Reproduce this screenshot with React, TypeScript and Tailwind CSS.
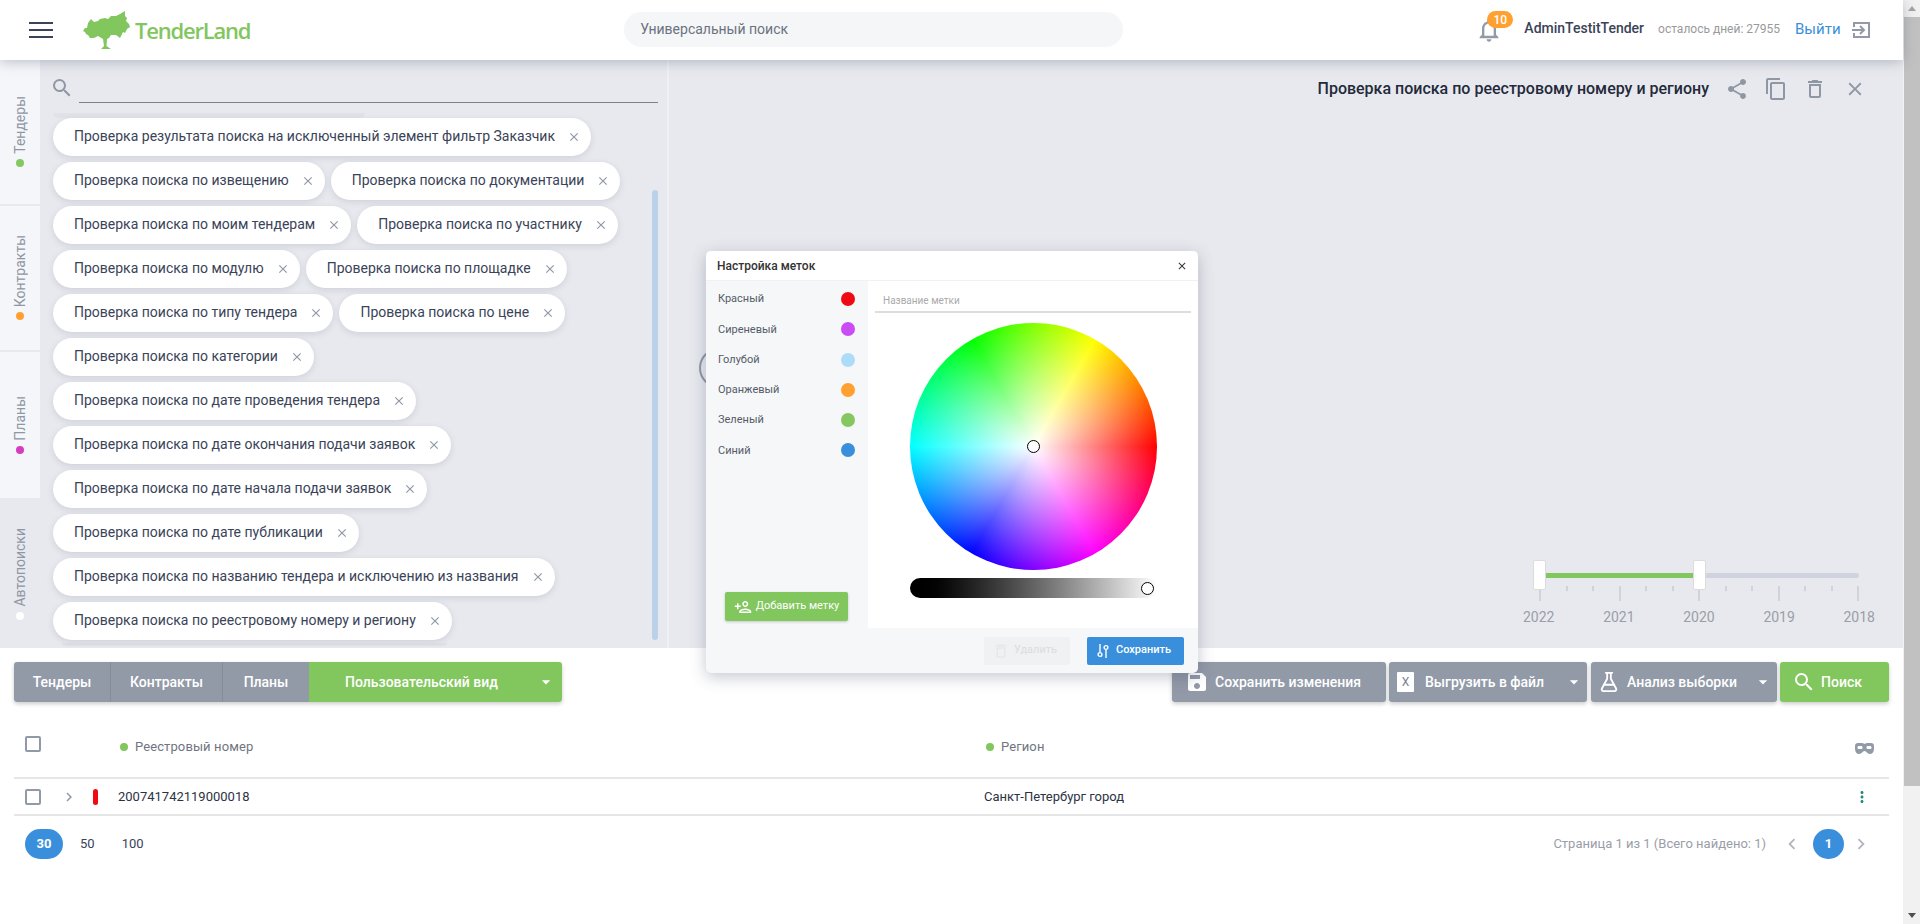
import {
  MdClose,
  MdContentCopy,
  MdDeleteOutline,
  MdOutlinePersonAdd,
  MdSave,
  MdSearch,
  MdShare,
  MdChevronLeft,
  MdChevronRight,
  MdMoreVert,
  MdOutlineNotifications,
  MdArrowDropDown,
} from 'react-icons/md';
import { FlaskConical } from 'lucide-react';

const chipRows = [
  ['Проверка результата поиска на исключенный элемент фильтр Заказчик'],
  ['Проверка поиска по извещению', 'Проверка поиска по документации'],
  ['Проверка поиска по моим тендерам', 'Проверка поиска по участнику'],
  ['Проверка поиска по модулю', 'Проверка поиска по площадке'],
  ['Проверка поиска по типу тендера', 'Проверка поиска по цене'],
  ['Проверка поиска по категории'],
  ['Проверка поиска по дате проведения тендера'],
  ['Проверка поиска по дате окончания подачи заявок'],
  ['Проверка поиска по дате начала подачи заявок'],
  ['Проверка поиска по дате публикации'],
  ['Проверка поиска по названию тендера и исключению из названия'],
  ['Проверка поиска по реестровому номеру и региону'],
];

const labels = [
  { name: 'Красный', color: '#f00a14' },
  { name: 'Сиреневый', color: '#c94cf5' },
  { name: 'Голубой', color: '#addcfa' },
  { name: 'Оранжевый', color: '#ffa030' },
  { name: 'Зеленый', color: '#85c862' },
  { name: 'Синий', color: '#3a8fdc' },
];

const sideTabs = [
  { name: 'Тендеры', dot: '#85c862', height: 144, active: false },
  { name: 'Контракты', dot: '#ffa030', height: 145, active: false },
  { name: 'Планы', dot: '#d63cc0', height: 146, active: false },
  { name: 'Автопоиски', dot: '#ffffff', height: 149, active: true },
];

const years = ['2022', '2021', '2020', '2019', '2018'];

function Logo() {
  return (
    <div className="flex items-center ml-[30px]">
      <svg width="48" height="39" viewBox="0 0 48 39" className="text-[#82c65e]">
        <polygon
          fill="currentColor"
          points="0,20 2,17 4,17 5,12 8,8 11,11 15,10 17,8 22,7 25,8 28,5 33,5 37,3 42,0 42,5 44,7 43,10 46,13 47,16 44,18 42,22 40,21 37,27 33,24 28,24 26,27 24,28 23.500,35 28,38 18,38 21,35 20,28 15,25 11,27 7,27 5,24 3,23 2,21"
        />
      </svg>
      <span className="ml-[4px] mb-[1px] text-[22px] leading-none font-semibold text-[#82c65e] font-['Open_Sans',sans-serif] tracking-[-1.2px]">
        TenderLand
      </span>
    </div>
  );
}

function Header() {
  return (
    <header className="relative z-10 flex items-center h-[60px] bg-white shadow-[0_2px_12px_rgba(80,90,120,0.35)]">
      <button className="ml-[29px] flex flex-col gap-[4.5px] w-[24px]">
        <span className="block h-[2.5px] bg-[#3a4358]" />
        <span className="block h-[2.5px] bg-[#3a4358]" />
        <span className="block h-[2.5px] bg-[#3a4358]" />
      </button>
      <Logo />
      <div className="ml-[374px] mb-[2px] flex items-center w-[499px] h-[35px] rounded-full bg-[#f5f6f8] pl-[16px] text-[14px] text-[#6b7280]">
        Универсальный поиск
      </div>
      <div className="relative ml-[356px] w-[20px] h-[24px] flex items-center justify-center">
        <MdOutlineNotifications size={28} className="text-[#929aa8] shrink-0" />
        <span className="absolute left-[8px] -top-[7px] flex items-center justify-center w-[26px] h-[17px] rounded-full bg-[#ffa030] text-white text-[12px] font-medium">
          10
        </span>
      </div>
      <span className="ml-[25px] mb-[3px] text-[14px] font-medium text-[#3a4358]">AdminTestitTender</span>
      <span className="ml-[14px] mb-[2px] text-[12px] text-[#9a9a9a]">осталось дней: 27955</span>
      <span className="ml-[15px] mb-[2px] text-[15px] text-[#3a8fdc]">Выйти</span>
      <svg width="18" height="18" viewBox="0 0 18 18" fill="none" stroke="#929aa8" strokeWidth="2" className="ml-[11px]">
        <path d="M2 6V2h15v14H2v-4" />
        <path d="M0 9h11M8 5l4 4-4 4" />
      </svg>
    </header>
  );
}

function Chip({ text }: { text: string }) {
  return (
    <div className="flex items-center h-[38px] rounded-full bg-white pl-[21px] pr-[10px] shadow-[0_2px_6px_rgba(90,100,130,0.18)]">
      <span className="mb-[1px] text-[14px] text-[#3a4358] whitespace-nowrap">{text}</span>
      <MdClose size={14} className="ml-[12px] text-[#8f97a5]" />
    </div>
  );
}

function SearchesPanel() {
  return (
    <div className="relative w-[629px] h-full border-r-2 border-[#eef0f3]">
      <div className="flex items-start h-[53px] pl-[10px] pr-[9px]">
        <MdSearch size={24} className="mt-[16px] text-[#8f97a5]" />
        <div className="ml-[5px] flex-1 h-[43px] border-b border-[#7a7f88]" />
      </div>
      <div className="ml-[13px] h-[5px] w-[312px] rounded-b-full bg-[#e1e2e8]" />
      <div className="flex flex-col gap-[6px] pl-[13px]">
        {chipRows.map((row) => (
          <div key={row[0]} className="flex gap-[6px]">
            {row.map((text) => (
              <Chip key={text} text={text} />
            ))}
          </div>
        ))}
      </div>
      <div className="ml-[22px] mt-[3px] h-[3px] w-[385px] rounded-b-full bg-[#e1e2e8]" />
      <div className="absolute left-[612px] top-[130px] w-[6px] h-[450px] rounded-full bg-[#b9d2ea]" />
    </div>
  );
}

function SideTabs() {
  return (
    <div className="flex flex-col w-[40px] shrink-0 gap-[2px]">
      {sideTabs.map((tab) => (
        <div
          key={tab.name}
          style={{ height: tab.height }}
          className={`flex items-center justify-center ${tab.active ? 'bg-[#e8e9ee]' : 'bg-[#f5f6f9]'}`}
        >
          <div className="flex flex-col-reverse items-center gap-[5px]">
            <span style={{ background: tab.dot }} className="block w-[8px] h-[8px] rounded-full" />
            <span className="[writing-mode:vertical-rl] rotate-180 text-[14px] leading-none text-[#8f97a5]">
              {tab.name}
            </span>
          </div>
        </div>
      ))}
    </div>
  );
}

function YearSlider() {
  return (
    <div className="relative w-[320px] mr-[44px] mb-[21px]">
      <div className="h-[5px] rounded-full bg-[#cfd3de]">
        <div className="h-[5px] w-[160px] bg-[#82c65e]" />
      </div>
      <span className="absolute left-[-6px] top-[-13px] w-[13px] h-[30px] rounded-[2px] bg-white border border-[#dcdcdc]" />
      <span className="absolute left-[154px] top-[-13px] w-[13px] h-[30px] rounded-[2px] bg-white border border-[#dcdcdc]" />
      <div className="flex justify-between mt-[8px] px-0">
        {Array.from({ length: 13 }).map((_, i) => (
          <span key={i} className={`block w-[2px] ${i % 3 === 0 ? 'h-[15px] bg-[#cfd3de]' : 'h-[5px] bg-[#cfd3de]'}`} />
        ))}
      </div>
      <div className="flex justify-between mt-[6px] -mx-[16px] text-[14px] leading-[20px] text-[#9a9ea8]">
        {years.map((y) => (
          <span key={y}>{y}</span>
        ))}
      </div>
    </div>
  );
}

function SliderIcon() {
  return (
    <svg width="12" height="14" viewBox="0 0 12 14" fill="none" stroke="white" strokeWidth="1.4">
      <path d="M3 0v8M9 6v8" />
      <circle cx="3" cy="10.5" r="1.9" />
      <circle cx="9" cy="3.5" r="1.9" />
    </svg>
  );
}

function LabelsModal() {
  return (
    <div className="absolute left-[706px] top-[251px] z-20 flex flex-col w-[492px] h-[422px] rounded-[5px] bg-[#f6f7f9] shadow-[0_4px_16px_rgba(60,70,100,0.3)] overflow-hidden">
      <div className="flex items-center justify-between h-[30px] px-[11px] bg-white border-b border-[#f0f1f3]">
        <span className="text-[12px] font-medium text-[#333]">Настройка меток</span>
        <MdClose size={12} className="mr-[-1px] text-[#333]" />
      </div>
      <div className="flex flex-1">
        <div className="flex flex-col w-[162px] pl-[12px] pr-[13px] pt-[3px] pb-[7px]">
          <div className="flex flex-col gap-[0.3px] flex-1">
            {labels.map((l) => (
              <div key={l.name} className="flex items-center justify-between h-[30px] text-[11px] text-[#555c68]">
                <span className="mt-[1px]">{l.name}</span>
                <span style={{ background: l.color }} className="block w-[14px] h-[14px] rounded-full" />
              </div>
            ))}
          </div>
          <button className="flex items-center justify-center gap-[4px] ml-[7px] w-[123px] h-[29px] rounded-[2px] bg-[#82c65e] text-white text-[11px] shadow-[0_1px_3px_rgba(0,0,0,0.2)]">
            <MdOutlinePersonAdd size={18} />
            Добавить метку
          </button>
        </div>
        <div className="flex-1 flex flex-col items-center bg-white px-[7px]">
          <div className="w-full h-[32px] pt-[12px] pl-[8px] border-b-2 border-[#dddddd] text-[10px] leading-[16px] text-[#aaaaaa]">
            Название метки
          </div>
          <div className="relative mt-[10px] w-[247px] h-[247px] rounded-full bg-[radial-gradient(closest-side,#ffffff,rgba(255,255,255,0)),conic-gradient(from_90deg,#ff0000,#ff00ff,#0000ff,#00ffff,#00ff00,#ffff00,#ff0000)]">
            <span className="absolute left-[117px] top-[117px] w-[13px] h-[13px] rounded-full border-[1.75px] border-black bg-white/60" />
          </div>
          <div className="relative mt-[8px] w-[247px] h-[20px] rounded-full bg-gradient-to-r from-black to-white">
            <span className="absolute left-[231px] top-[4px] w-[13px] h-[13px] rounded-full border-[1.75px] border-black bg-white" />
          </div>
        </div>
      </div>
      <div className="flex items-center justify-end gap-[17px] h-[45px] pr-[14px]">
        <button className="flex items-center w-[86px] h-[28px] pl-[8px] gap-[4px] rounded-[2px] bg-[#f0f1f3] text-[#dcdcdc] text-[11px]">
          <MdDeleteOutline size={18} className="text-[#e6e7ea]" />
          Удалить
        </button>
        <button className="flex items-center w-[97px] h-[28px] pl-[10px] gap-[7px] rounded-[2px] bg-[#3a8fdc] text-white text-[11px] font-medium">
          <SliderIcon />
          Сохранить
        </button>
      </div>
    </div>
  );
}

function MainPanel() {
  return (
    <div className="relative flex-1 flex flex-col justify-between items-end">
      <div className="flex items-center mt-[17px] mr-[39px]">
        <span className="text-[16px] font-medium text-[#232a3a] mr-[16px]">Проверка поиска по реестровому номеру и региону</span>
        <MdShare size={24} className="text-[#8f97a5]" />
        <MdContentCopy size={24} className="ml-[15px] text-[#8f97a5]" />
        <MdDeleteOutline size={24} className="ml-[15px] text-[#8f97a5]" />
        <MdClose size={22} className="ml-[17px] -mr-[2px] text-[#8f97a5]" />
      </div>
      <YearSlider />
    </div>
  );
}

function ToolButton({ children, className }: { children: React.ReactNode; className: string }) {
  return (
    <button className={`relative flex items-center h-[40px] rounded-[3px] bg-[#929aa8] text-white text-[14px] font-medium shadow-[0_2px_4px_rgba(0,0,0,0.2)] ${className}`}>
      {children}
    </button>
  );
}

function Toolbar() {
  return (
    <div className="flex justify-between px-[14px] pt-[14px]">
      <div className="flex h-[40px] rounded-[3px] overflow-hidden text-white text-[14px] font-medium shadow-[0_2px_4px_rgba(0,0,0,0.2)]">
        <span className="flex items-center justify-center w-[97px] bg-[#929aa8] border-r border-[#858d9c]">Тендеры</span>
        <span className="flex items-center justify-center w-[112px] bg-[#929aa8] border-r border-[#858d9c]">Контракты</span>
        <span className="flex items-center justify-center w-[86px] bg-[#929aa8]">Планы</span>
        <span className="flex items-center w-[253px] pl-[36px] bg-[#82c65e]">
          Пользовательский вид
          <MdArrowDropDown size={20} className="ml-[38px]" />
        </span>
      </div>
      <div className="flex">
        <ToolButton className="w-[214px] pl-[13px] mr-[3px]">
          <MdSave size={24} />
          <span className="ml-[6px]">Сохранить изменения</span>
        </ToolButton>
        <ToolButton className="w-[198px] pl-[8px] mr-[4px]">
          <span className="flex items-center justify-center w-[17px] h-[20px] bg-white rounded-[1px] text-[#7a8290] text-[12px] font-normal">X</span>
          <span className="ml-[11px]">Выгрузить в файл</span>
          <MdArrowDropDown size={20} className="ml-auto mr-[3px]" />
        </ToolButton>
        <ToolButton className="w-[186px] pl-[7px] mr-[3px]">
          <FlaskConical size={22} strokeWidth={2} />
          <span className="ml-[7px]">Анализ выборки</span>
          <MdArrowDropDown size={20} className="ml-auto mr-[4px]" />
        </ToolButton>
        <ToolButton className="w-[109px] pl-[12px] !bg-[#82c65e]">
          <MdSearch size={24} />
          <span className="ml-[5px]">Поиск</span>
        </ToolButton>
      </div>
    </div>
  );
}

function Checkbox() {
  return <span className="block w-[16px] h-[16px] rounded-[2px] border-2 border-[#929aa8]" />;
}

function MaskIcon() {
  return (
    <svg width="19" height="11" viewBox="0 0 19 11">
      <path
        fill="#929aa8"
        fillRule="evenodd"
        d="M3 0h4c1.500 0 2 1 2.500 1S11 0 12 0h4c2 0 3 1 3 3v3c0 3-2 5-4 5-3 0-3.500-3-5.500-3S7 11 4 11c-2 0-4-2-4-5V3c0-2 1-3 3-3zM4 3c-1 0-1.500.5-1.500 1.500S3 6 4 6h2c1 0 1.500-.5 1.500-1.500S7 3 6 3zm9 0c-1 0-1.500.5-1.500 1.500S12 6 13 6h2c1 0 1.500-.5 1.500-1.500S16 3 15 3z"
      />
    </svg>
  );
}

function ResultsTable() {
  return (
    <div className="px-[14px]">
      <div className="flex items-center h-[77px] pt-[14px] border-b-2 border-[#e6e6e6] text-[13px] text-[#6f7580]">
        <div className="w-[102px] pl-[11px] pb-[6px]">
          <Checkbox />
        </div>
        <div className="flex items-center w-[867px] gap-[7px] pl-[4px] tracking-[0.1px]">
          <span className="block w-[8px] h-[8px] rounded-full bg-[#82c65e]" />
          Реестровый номер
        </div>
        <div className="flex items-center flex-1 gap-[7px] pl-[3px] tracking-[0.1px]">
          <span className="block w-[8px] h-[8px] rounded-full bg-[#82c65e]" />
          Регион
        </div>
        <div className="mr-[15px] mt-[4px]">
          <MaskIcon />
        </div>
      </div>
      <div className="flex items-center h-[37px] border-b-2 border-[#e6e6e6] text-[13px] text-[#2c3344]">
        <div className="w-[47px] pl-[11px]">
          <Checkbox />
        </div>
        <MdChevronRight size={18} className="text-[#929aa8] -ml-[1px]" />
        <span className="block ml-[15px] w-[5px] h-[16px] rounded-full bg-[#f00a14]" />
        <span className="ml-[20px] mt-[1px] w-[866px]">200741742119000018</span>
        <span className="flex-1 mt-[1px]">Санкт-Петербург город</span>
        <MdMoreVert size={18} className="mr-[18px] text-[#1f8a80]" />
      </div>
      <div className="flex items-center h-[59px] text-[13px] pb-[3px]">
        <div className="flex items-center ml-[11px] text-[#3a4358]">
          <span className="flex items-center justify-center w-[38px] h-[30px] rounded-full bg-[#3a8fdc] text-white font-bold">30</span>
          <span className="ml-[17px]">50</span>
          <span className="ml-[27px]">100</span>
        </div>
        <span className="ml-auto text-[#9a9ea8]">Страница 1 из 1 (Всего найдено: 1)</span>
        <MdChevronLeft size={22} className="ml-[15px] text-[#b0b5c0]" />
        <span className="ml-[10px] flex items-center justify-center w-[31px] h-[30px] rounded-full bg-[#3a8fdc] text-white font-bold">1</span>
        <MdChevronRight size={22} className="ml-[6px] mr-[17px] text-[#b0b5c0]" />
      </div>
    </div>
  );
}

function PageScrollbar() {
  return (
    <div className="flex flex-col w-[17px] h-[924px] shrink-0 bg-[#f1f1f1] pl-[1px]">
      <div className="flex items-center justify-center h-[17px]">
        <span className="block w-0 h-0 border-x-[4px] border-x-transparent border-b-[5px] border-b-[#a3a3a3]" />
      </div>
      <div className="h-[769px] bg-[#c1c1c1]" />
      <div className="flex-1 flex items-end justify-center pb-[6px]">
        <span className="block w-0 h-0 border-x-[4px] border-x-transparent border-t-[5px] border-t-[#505050]" />
      </div>
    </div>
  );
}

export default function App() {
  return (
    <div className="relative flex w-[1920px] h-[924px] overflow-hidden bg-white font-['Roboto',sans-serif]">
      <div className="flex flex-col flex-1 min-w-0">
        <Header />
        <div className="relative flex h-[588px] bg-[#e8e9ee]">
          <SideTabs />
          <SearchesPanel />
          <span className="absolute left-[699px] top-[288px] w-[40px] h-[40px] rounded-full border-2 border-[#8f97a5]" />
          <MainPanel />
        </div>
        <Toolbar />
        <ResultsTable />
      </div>
      <PageScrollbar />
      <LabelsModal />
    </div>
  );
}
